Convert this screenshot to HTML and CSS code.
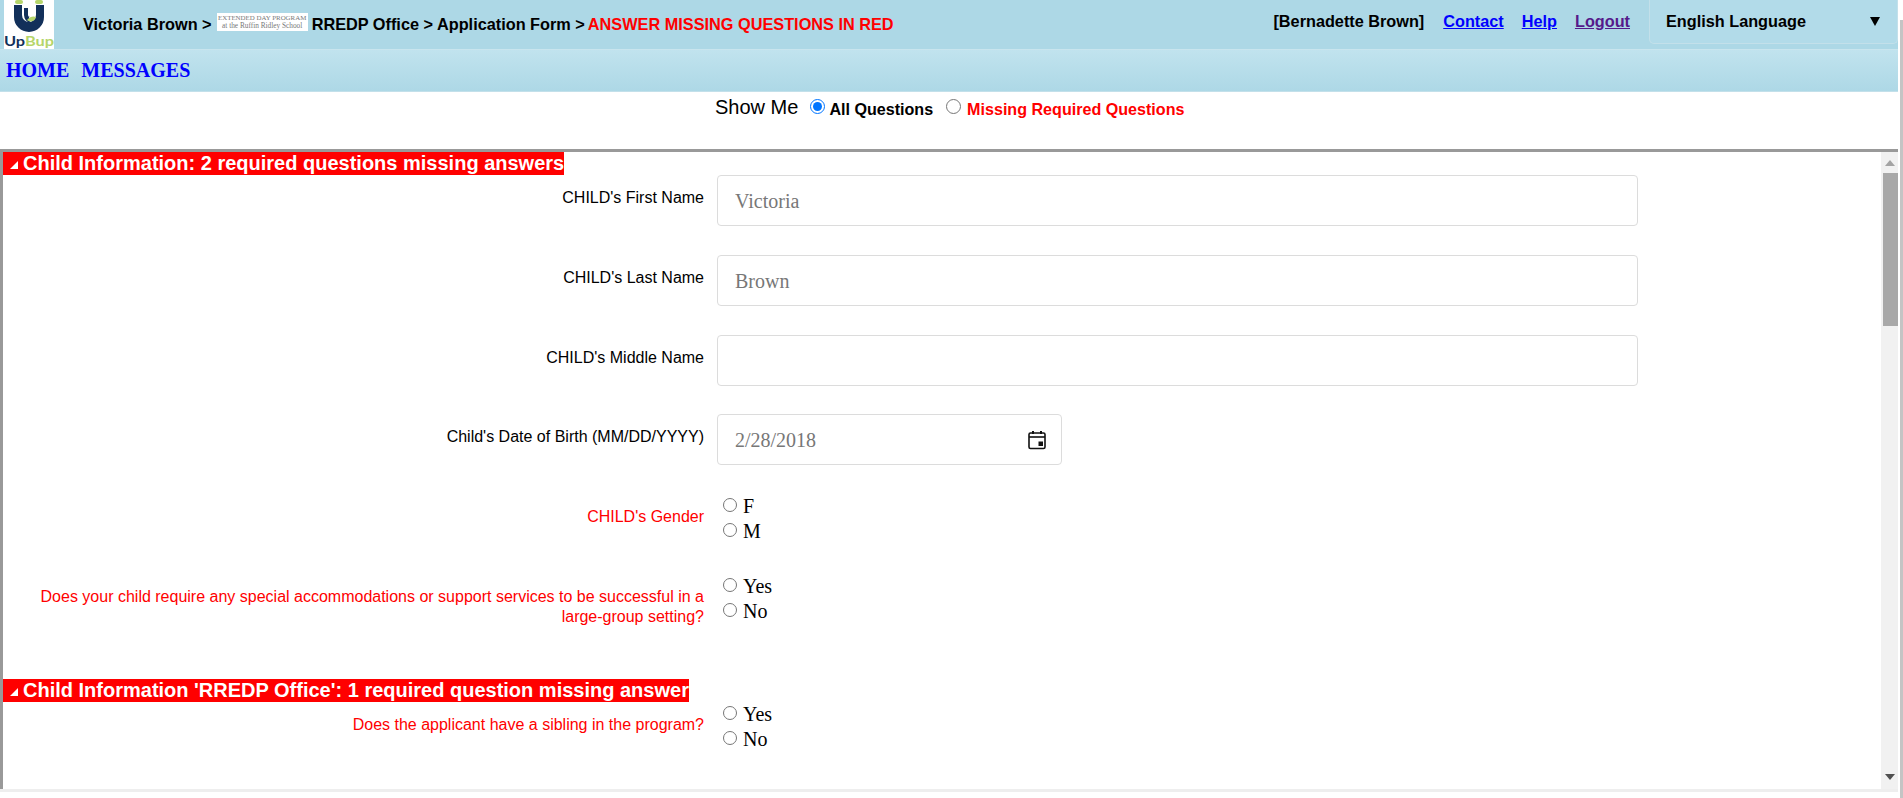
FILE: index.html
```html
<!DOCTYPE html>
<html lang="en">
  <head>
    <meta charset="UTF-8" />
    <meta name="viewport" content="width=device-width, initial-scale=1.0" />
    <title>Application Form</title>
    <link rel="stylesheet" href="styles.css">
  </head>
  <body>
    <div class="wrapper">
      <div class="main">
        <header class="top-bar">
          <svg class="logo" viewBox="0 0 50 49" aria-label="UpBup">
            <rect width="50" height="49" fill="#fff" />
            <rect x="11" y="0" width="8" height="4" rx="2" fill="#b5d56a" />
            <rect x="31" y="0" width="8" height="4" rx="2" fill="#b5d56a" />
            <path d="M10 5h8v10a7 7 0 0 0 14 0V5h8v12a15 15 0 0 1-30 0z" fill="#12305a" />
            <path d="M20 8h4v7a2 2 0 0 0 2 2h-1l1 6a9 9 0 0 1-6-8z" fill="#12305a" />
            <path d="M23 20c3-4 7-4 9-3-1 4-5 6-9 3z" fill="#b5d56a" />
            <text x="0" y="46" class="logo-text" textLength="50" lengthAdjust="spacingAndGlyphs"><tspan fill="#12305a">Up</tspan><tspan fill="#b5d56a">Bup</tspan></text>
          </svg>
          <div class="crumbs">
            <span>Victoria Brown &gt;</span>
            <span class="school-badge"><span class="school-line1">EXTENDED DAY PROGRAM</span><br />at the Ruffin Ridley School</span>
            <span>RREDP Office &gt; Application Form &gt;</span>
            <span class="crumb-alert">ANSWER MISSING QUESTIONS IN RED</span>
          </div>
          <div class="account">
            <span class="account-name">[Bernadette Brown]</span>
            <a href="#contact">Contact</a>
            <a href="#help">Help</a>
            <a href="#logout" class="visited">Logout</a>
          </div>
          <div class="lang-select">
            <span>English Language</span>
            <span class="lang-arrow"></span>
          </div>
        </header>
        <nav class="nav-bar">
          <a href="#home">HOME</a>
          <a href="#messages">MESSAGES</a>
        </nav>
        <div class="show-me">
          <span class="show-label">Show Me</span>
          <label class="show-opt"><input type="radio" name="show" checked /><b>All Questions</b></label>
          <label class="show-opt red"><input type="radio" name="show" /><b>Missing Required Questions</b></label>
        </div>
        <div class="scroll-box">
          <div class="form-area">
            <h2 class="section-head"><span class="tri"></span>Child Information: 2 required questions missing answers</h2>
            <div class="row">
              <label class="q">CHILD's First Name</label>
              <input class="box" type="text" value="Victoria" readonly />
            </div>
            <div class="row">
              <label class="q">CHILD's Last Name</label>
              <input class="box" type="text" value="Brown" readonly />
            </div>
            <div class="row tight">
              <label class="q">CHILD's Middle Name</label>
              <input class="box" type="text" value="" readonly />
            </div>
            <div class="row">
              <label class="q">Child's Date of Birth (MM/DD/YYYY)</label>
              <div class="box date-box">
                <span>2/28/2018</span>
                <svg class="cal" viewBox="0 0 18 20">
                  <path d="M5 1v3M13 1v3" stroke="#111" stroke-width="2" />
                  <rect x="1" y="3" width="16" height="15.5" rx="1.5" fill="none" stroke="#111" stroke-width="1.6" />
                  <path d="M1 7h16" stroke="#111" stroke-width="1.6" />
                  <rect x="10.5" y="11.5" width="4.5" height="4.5" fill="#111" />
                </svg>
              </div>
            </div>
            <div class="row">
              <label class="q red">CHILD's Gender</label>
              <div class="choices">
                <label><input type="radio" name="gender" />F</label>
                <label><input type="radio" name="gender" />M</label>
              </div>
            </div>
            <div class="row">
              <label class="q red">Does your child require any special accommodations or support services to be successful in a large-group setting?</label>
              <div class="choices">
                <label><input type="radio" name="support" />Yes</label>
                <label><input type="radio" name="support" />No</label>
              </div>
            </div>
            <h2 class="section-head second"><span class="tri"></span>Child Information 'RREDP Office': 1 required question missing answer</h2>
            <div class="row">
              <label class="q red">Does the applicant have a sibling in the program?</label>
              <div class="choices">
                <label><input type="radio" name="sibling" />Yes</label>
                <label><input type="radio" name="sibling" />No</label>
              </div>
            </div>
          </div>
          <div class="fake-scroll">
            <span class="arrow-up"></span>
            <div class="scroll-thumb"></div>
            <span class="arrow-down"></span>
          </div>
        </div>
        <div class="box-foot"></div>
      </div>
      <div class="page-gutter"><div class="page-thumb"></div></div>
    </div>
  </body>
</html>
```

FILE: styles.css
```css
html,
body {
  margin: 0;
  height: 100%;
  overflow: hidden;
  background-color: white;
}
body {
  font-family: "Liberation Sans", Arial, sans-serif;
}
.wrapper {
  display: flex;
  height: 798px;
}
.main {
  width: 1898px;
  display: flex;
  flex-direction: column;
}
.page-gutter {
  width: 3px;
  margin-left: 2px;
  padding-top: 20px;
  display: flex;
}
.page-thumb {
  flex: 1;
  background-color: #c4c4c4;
}

/* top bar */
.top-bar {
  height: 49px;
  background-color: #add8e6;
  display: flex;
  align-items: flex-start;
  flex-shrink: 0;
}
.logo {
  width: 50px;
  height: 49px;
  margin-left: 4px;
  flex-shrink: 0;
}
.logo-text {
  font-family: "Lato", sans-serif;
  font-size: 13.5px;
  font-weight: bold;
}
.crumbs {
  display: flex;
  align-items: center;
  margin-left: 29px;
  height: 49px;
  font-size: 16.3px;
  font-weight: bold;
  color: black;
  flex: 1;
  white-space: nowrap;
}
.school-badge {
  width: 91px;
  height: 18px;
  margin: 0 4px 6px 5px;
  background-color: white;
  color: #777;
  font-family: "Liberation Serif", serif;
  font-size: 7.3px;
  font-weight: normal;
  line-height: 8px;
  text-align: center;
  padding-top: 1px;
  box-sizing: border-box;
}
.school-line1 {
  font-size: 6.9px;
}
.crumb-alert {
  margin-left: 3px;
  color: red;
}
.account {
  display: flex;
  height: 42px;
  align-items: center;
  font-size: 16.25px;
  font-weight: bold;
  margin-right: 19px;
  white-space: nowrap;
}
.account-name {
  color: black;
  margin-right: 19px;
}
.account a {
  color: blue;
  margin-right: 18px;
}
.account a:last-child {
  margin-right: 0;
}
.account a.visited {
  color: #551a8b;
}
.lang-select {
  width: 249px;
  height: 44px;
  box-sizing: border-box;
  border: 1px solid #c3e0ea;
  border-top: 0;
  border-radius: 0 0 5px 5px;
  background-color: #b2dbe9;
  display: flex;
  align-items: center;
  justify-content: space-between;
  padding: 0 17px 0 16px;
  font-size: 16.25px;
  font-weight: bold;
  color: black;
}
.lang-arrow {
  width: 0;
  height: 0;
  border-left: 5px solid transparent;
  border-right: 5px solid transparent;
  border-top: 9px solid black;
}

/* nav */
.nav-bar {
  height: 43px;
  flex-shrink: 0;
  box-sizing: border-box;
  display: flex;
  align-items: center;
  gap: 12px;
  padding: 0 0 0 6px;
  background: linear-gradient(#c1e3ee, #add8e6);
  border-top: 1px solid #c9e5ee;
  border-bottom: 1px solid #c3e0ea;
}
.nav-bar a {
  font-family: "Liberation Serif", serif;
  font-size: 20px;
  font-weight: bold;
  color: blue;
  text-decoration: none;
}

/* show me */
.show-me {
  height: 57px;
  flex-shrink: 0;
  box-sizing: border-box;
  padding: 4px 0 0 715px;
  display: flex;
  align-items: flex-start;
}
.show-label {
  font-size: 20px;
  line-height: 23px;
  margin-right: 11px;
}
.show-opt {
  display: flex;
  align-items: flex-start;
  font-size: 16.1px;
  line-height: 26px;
  margin-right: 12px;
  color: black;
}
.show-opt input {
  margin: 3px 4px 0 1px;
  width: 15px;
  height: 15px;
}
.show-opt.red {
  color: red;
}
.show-opt.red input {
  margin-right: 6px;
}

/* form */
.scroll-box {
  height: 640px;
  flex-shrink: 0;
  box-sizing: border-box;
  border-top: 3px solid #999;
  border-left: 3px solid #999;
  display: flex;
  overflow: hidden;
}
.form-area {
  flex: 1;
  min-width: 0;
}
.section-head {
  width: fit-content;
  margin: 0;
  height: 23px;
  display: flex;
  align-items: center;
  background-color: red;
  color: white;
  font-size: 20px;
  font-weight: bold;
  padding-left: 7px;
  white-space: nowrap;
}
.section-head.second {
  margin-top: 52px;
}
.tri {
  width: 8px;
  height: 8px;
  margin: 3px 5px 0 0;
  background-color: white;
  clip-path: polygon(100% 0, 100% 100%, 0 100%);
}
.row {
  display: grid;
  grid-template-columns: 701px 1fr;
  column-gap: 13px;
  margin-bottom: 29px;
}
.row.tight {
  margin-bottom: 28px;
}
.q {
  font-size: 16px;
  line-height: 20px;
  padding-top: 13px;
  text-align: right;
  color: black;
}
.q.red {
  color: red;
}
.box {
  width: 921px;
  height: 51px;
  box-sizing: border-box;
  border: 1px solid #dcdcdc;
  border-radius: 4px;
  padding: 2px 17px 0;
  background-color: white;
  font-family: "Liberation Serif", serif;
  font-size: 20px;
  color: #777;
  outline: none;
}
.date-box {
  width: 345px;
  display: flex;
  align-items: center;
  justify-content: space-between;
  padding-right: 15px;
}
.cal {
  width: 18px;
  height: 20px;
  margin-top: -2px;
}
.choices {
  display: flex;
  flex-direction: column;
  font-family: "Liberation Serif", serif;
  font-size: 20px;
  line-height: 25px;
  height: 50px;
  margin-bottom: 1px;
  color: black;
}
.choices label {
  display: flex;
  align-items: flex-start;
}
.choices input {
  width: 14px;
  height: 14px;
  margin: 4px 6px 0 6px;
}

/* scrollbar inside the box */
.fake-scroll {
  width: 17px;
  flex-shrink: 0;
  background-color: #f1f1f1;
  display: flex;
  flex-direction: column;
  align-items: flex-end;
}
.arrow-up {
  width: 0;
  height: 0;
  margin: 8px 3px 7px 0;
  border-left: 5px solid transparent;
  border-right: 5px solid transparent;
  border-bottom: 6px solid #a3a3a3;
}
.scroll-thumb {
  width: 15px;
  height: 153px;
  background-color: #a8a8a8;
}
.arrow-down {
  width: 0;
  height: 0;
  margin: auto 3px 9px 0;
  border-left: 5px solid transparent;
  border-right: 5px solid transparent;
  border-top: 6px solid #505050;
}
.box-foot {
  height: 3px;
  background-color: #eee;
  flex-shrink: 0;
}
```
